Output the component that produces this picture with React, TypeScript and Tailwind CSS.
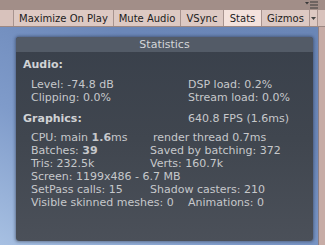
import React from "react";

const font = { fontFamily: '"DejaVu Sans", Verdana, sans-serif' };

function Btn({ label, w, active }: { label: string; w: string; active?: boolean }) {
  return (
    <div
      className={`${w} h-full flex items-center justify-center border-r border-[#a8948f] text-[10px] text-[#1c1c1c] ${
        active ? "bg-[#f4e2dc]" : "bg-[#ddc9c3]"
      }`}
    >
      {label}
    </div>
  );
}

export default function App() {
  return (
    <div className="w-[325px] h-[245px] overflow-hidden bg-[#c9b0aa] flex flex-col" style={font}>
      {/* top strip */}
      <div className="h-[10px] bg-[#a28e88] flex justify-end items-start pr-[7px] pt-[1px]">
        <svg width="13" height="8" viewBox="0 0 13 8">
          <path d="M0 1 L4 1 L2 3.5 Z" fill="#3a3a3a" />
          <rect x="5" y="0.5" width="8" height="1" fill="#3a3a3a" />
          <rect x="5" y="3.5" width="8" height="1" fill="#3a3a3a" />
          <rect x="5" y="6.5" width="8" height="1" fill="#3a3a3a" />
        </svg>
      </div>
      {/* toolbar */}
      <div className="h-[17px] flex bg-[#d8c2bc] border-b border-[#9c8883]">
        <div className="w-[14px] h-full border-r border-[#a8948f]" />
        <Btn label="Maximize On Play" w="w-[100px]" />
        <Btn label="Mute Audio" w="w-[67px]" />
        <Btn label="VSync" w="w-[43px]" />
        <Btn label="Stats" w="w-[38px]" active />
        <Btn label="Gizmos" w="w-[48px]" />
        <div className="w-[8px] h-full bg-[#ddc9c3] border-r border-[#a8948f] flex items-center justify-center">
          <svg width="5" height="3" viewBox="0 0 5 3">
            <path d="M0 0 L5 0 L2.5 3 Z" fill="#444" />
          </svg>
        </div>
        <div className="flex-1" />
      </div>
      {/* game view */}
      <div className="flex-1 flex">
        <div className="w-[319px] h-full bg-[linear-gradient(30deg,#a7c0e2_0%,#7f9bca_35%,#6b87b8_70%,#6a86b6_100%)] border-r border-[#8b7f86] pt-[10px] pl-[16px]">
          <div className="w-[297px] h-[204px] rounded-[3px] bg-[linear-gradient(180deg,#39404b_0%,#40464f_50%,#4b5059_100%)] shadow-[0_0_3px_1px_rgba(30,40,60,0.45)] overflow-hidden text-[11px] text-[#c6c8cb]">
            <div className="h-[15px] bg-[#535b67] flex items-center justify-center text-[#d4d6d9] leading-[15px]">
              Statistics
            </div>
            <div className="pl-[7px] mt-[6px] leading-[13px] font-bold text-[#d0d2d5]">Audio:</div>
            <div className="pl-[15px] mt-[7px] leading-[13px]">
              <div className="flex">
                <span className="w-[157px]">Level: -74.8 dB</span>
                <span>DSP load: 0.2%</span>
              </div>
              <div className="flex">
                <span className="w-[157px]">Clipping: 0.0%</span>
                <span>Stream load: 0.0%</span>
              </div>
            </div>
            <div className="pl-[7px] mt-[8px] leading-[13px] flex">
              <span className="w-[165px] font-bold text-[#d0d2d5]">Graphics:</span>
              <span>640.8 FPS (1.6ms)</span>
            </div>
            <div className="pl-[15px] mt-[6px] leading-[13px] whitespace-pre">
              <div className="flex">
                <span className="w-[122px]">
                  CPU: main <b>1.6</b>ms
                </span>
                <span>render thread 0.7ms</span>
              </div>
              <div className="flex">
                <span className="w-[119px]">
                  Batches: <b>39</b>
                </span>
                <span>Saved by batching: 372</span>
              </div>
              <div className="flex">
                <span className="w-[119px]">Tris: 232.5k</span>
                <span>Verts: 160.7k</span>
              </div>
              <div>Screen: 1199x486 - 6.7 MB</div>
              <div className="flex">
                <span className="w-[119px]">SetPass calls: 15</span>
                <span>Shadow casters: 210</span>
              </div>
              <div className="flex">
                <span className="w-[157px]">Visible skinned meshes: 0</span>
                <span>Animations: 0</span>
              </div>
            </div>
          </div>
        </div>
        <div className="flex-1 bg-[#c7aca6]" />
      </div>
    </div>
  );
}
